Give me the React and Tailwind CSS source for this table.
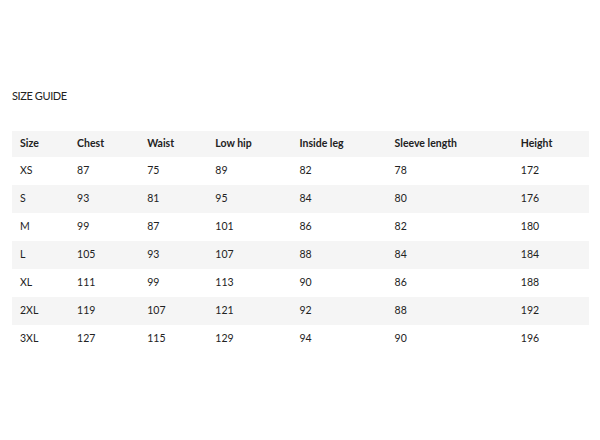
import React from 'react';

const columns = [
  { label: 'Size', w: 'w-[57px]' },
  { label: 'Chest', w: 'w-[70px]' },
  { label: 'Waist', w: 'w-[68px]' },
  { label: 'Low hip', w: 'w-[84px]' },
  { label: 'Inside leg', w: 'w-[95px]' },
  { label: 'Sleeve length', w: 'w-[126px]' },
  { label: 'Height', w: 'w-[76px]' },
];

const rows = [
  ['XS', 87, 75, 89, 82, 78, 172],
  ['S', 93, 81, 95, 84, 80, 176],
  ['M', 99, 87, 101, 86, 82, 180],
  ['L', 105, 93, 107, 88, 84, 184],
  ['XL', 111, 99, 113, 90, 86, 188],
  ['2XL', 119, 107, 121, 92, 88, 192],
  ['3XL', 127, 115, 129, 94, 90, 196],
];

export default function App() {
  return (
    <div className="w-[600px] h-[440px] bg-white px-3 pt-[89px] font-['Lato','Liberation_Sans',sans-serif] text-[#222]">
      <h1 className="text-[11px] leading-[14px] tracking-[-0.4px] uppercase">Size guide</h1>

      {/* size table, header + zebra rows */}
      <table className="mt-[28px] w-[577px] table-fixed border-collapse text-[10.5px]">
        <thead>
          <tr className="bg-[#f5f5f5] h-[26px]">
            {columns.map(c => (
              <th key={c.label} className={`${c.w} pl-2 text-left font-bold`}>{c.label}</th>
            ))}
          </tr>
        </thead>
        <tbody>
          {rows.map((r, i) => (
            <tr key={r[0]} className={`h-[28px] ${i % 2 === 1 ? 'bg-[#f5f5f5]' : 'bg-white'}`}>
              {r.map((v, j) => (
                <td key={j} className="pl-2 text-left">{v}</td>
              ))}
            </tr>
          ))}
        </tbody>
      </table>
    </div>
  );
}
